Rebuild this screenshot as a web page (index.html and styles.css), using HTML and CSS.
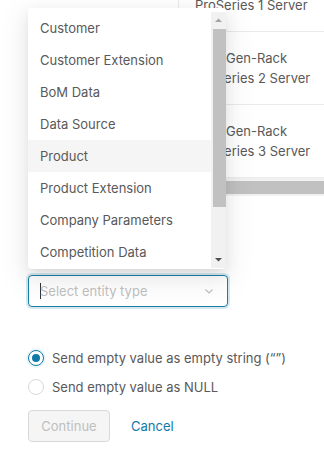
FILE: index.html
```html
<!DOCTYPE html>
<html lang="en">
<head>
    <meta charset="UTF-8">
    <meta name="viewport" content="width=device-width, initial-scale=1.0">
    <title>Import mapping</title>
    <link rel="stylesheet" href="styles.css">
</head>
<body>
    <div class="page">
        <div class="grid-area">
            <div class="grid-body">
                <div class="grid-row">
                    <div class="cell">Zeta Gen-Rack<br>ProSeries 1 Server</div>
                </div>
                <div class="grid-row">
                    <div class="cell">Zeta Gen-Rack<br>ProSeries 2 Server</div>
                </div>
                <div class="grid-row">
                    <div class="cell">Zeta Gen-Rack<br>ProSeries 3 Server</div>
                </div>
            </div>
            <div class="hscroll">
                <div class="hscroll-thumb"></div>
            </div>
        </div>

        <form class="form">
            <label class="field-label">Entity type</label>
            <div class="select is-focused">
                <span class="caret"></span>
                <span class="placeholder">Select entity type</span>
                <svg class="chevron" width="12" height="12" viewBox="0 0 12 12">
                    <path d="M2.5 4.5 L6 8 L9.5 4.5" fill="none" stroke="#bfbfbf" stroke-width="1.2"/>
                </svg>
            </div>

            <div class="radios">
                <label class="radio">
                    <span class="radio-dot is-checked"></span>
                    Send empty value as empty string (&ldquo;&rdquo;)
                </label>
                <label class="radio">
                    <span class="radio-dot"></span>
                    Send empty value as NULL
                </label>
            </div>

            <div class="actions">
                <button type="button" class="btn" disabled>Continue</button>
                <button type="button" class="btn-link">Cancel</button>
            </div>
        </form>

        <!-- dropdown of the entity type select -->
        <div class="dropdown">
            <div class="options">
                <div class="option">Customer</div>
                <div class="option">Customer Extension</div>
                <div class="option">BoM Data</div>
                <div class="option">Data Source</div>
                <div class="option is-active">Product</div>
                <div class="option">Product Extension</div>
                <div class="option">Company Parameters</div>
                <div class="option">Competition Data</div>
            </div>
            <div class="vscroll">
                <div class="vscroll-btn">
                    <svg width="15" height="17" viewBox="0 0 15 17"><path d="M4 10 L7.5 6.5 L11 10 Z" fill="#a3a3a3"/></svg>
                </div>
                <div class="vscroll-track">
                    <div class="vscroll-thumb"></div>
                </div>
                <div class="vscroll-btn">
                    <svg width="15" height="17" viewBox="0 0 15 17"><path d="M4 7 L7.5 10.5 L11 7 Z" fill="#505050"/></svg>
                </div>
            </div>
        </div>
    </div>
</body>
</html>
```

FILE: styles.css
```css
body {
    margin: 0;
    font-family: Inter, "Noto Sans", sans-serif;
    font-size: 13px;
    color: #595959;
    background: #fff;
}
.page {
    position: relative;
    width: 324px;
    height: 449px;
    overflow: hidden;
}

/* table behind the dropdown */
.grid-area {
    margin-left: 178px;
    width: 200px;
}
.grid-body {
    height: 178px;
    overflow: hidden;
}
.grid-row {
    border-bottom: 1px solid #ebebeb;
}
.grid-row:first-child {
    margin-top: -41px;
}
.cell {
    border-left: 1px solid #ebebeb;
    padding: 16px 16px;
    line-height: 20px;
    white-space: nowrap;
}
.hscroll {
    height: 18px;
    background: #f1f1f1;
    padding: 3px 0 2px;
    box-sizing: border-box;
}
.hscroll-thumb {
    height: 13px;
    background: #c1c1c1;
}

/* form */
.form {
    padding: 55px 0 0 28px;
    width: 200px;
}
.field-label {
    display: block;
    line-height: 20px;
    margin-bottom: 4px;
    color: #595959;
}
.select {
    display: flex;
    align-items: center;
    height: 32px;
    box-sizing: border-box;
    border: 1px solid #d9d9d9;
    border-radius: 4px;
    padding: 0 11px;
    background: #fff;
}
.select.is-focused {
    border-color: #1a7fa8;
    box-shadow: 0 0 0 2px rgba(26, 127, 168, 0.18);
}
.caret {
    display: inline-block;
    width: 1px;
    height: 16px;
    background: #333;
    margin-right: -1px;
}
.placeholder {
    flex: 1;
    color: #bfbfbf;
}
.chevron {
    display: block;
    margin-right: 1px;
}

.radios {
    margin-top: 40px;
    display: flex;
    flex-direction: column;
    gap: 7px;
}
.radio {
    display: flex;
    align-items: center;
    gap: 8px;
    line-height: 22px;
    white-space: nowrap;
}
.radio-dot {
    flex-shrink: 0;
    width: 16px;
    height: 16px;
    box-sizing: border-box;
    border: 1px solid #d9d9d9;
    border-radius: 50%;
    background: #fff;
    display: flex;
    align-items: center;
    justify-content: center;
}
.radio-dot.is-checked {
    border-color: #0f7aa8;
    box-shadow: 0 0 0 2px rgba(15, 122, 168, 0.08);
}
.radio-dot.is-checked::after {
    content: "";
    width: 8px;
    height: 8px;
    border-radius: 50%;
    background: #0f7aa8;
}

.actions {
    margin-top: 12px;
    display: flex;
    align-items: center;
    gap: 6px;
}
.btn {
    width: 82px;
    height: 32px;
    padding: 0;
    font: inherit;
    border: 1px solid #d9d9d9;
    border-radius: 4px;
    background: #f5f5f5;
    color: #bfbfbf;
}
.btn-link {
    height: 32px;
    padding: 0 15px;
    font: inherit;
    border: none;
    background: none;
    color: #0f7aa8;
    cursor: pointer;
}

/* dropdown overlay */
.dropdown {
    position: absolute;
    left: 28px;
    top: 8px;
    width: 198px;
    padding: 4px 0 1px;
    display: flex;
    background: #fff;
    border-radius: 4px;
    box-shadow: 0 6px 16px 0 rgba(0, 0, 0, 0.08), 0 3px 6px -4px rgba(0, 0, 0, 0.12), 0 9px 28px 8px rgba(0, 0, 0, 0.05);
}
.options {
    flex: 1;
    height: 256px;
    overflow: hidden;
}
.option {
    height: 32px;
    line-height: 32px;
    padding: 0 12px;
    white-space: nowrap;
    color: #595959;
}
.option.is-active {
    background: #f5f5f5;
}
.vscroll {
    width: 15px;
    height: 256px;
    display: flex;
    flex-direction: column;
    background: #f1f1f1;
}
.vscroll-btn {
    height: 17px;
}
.vscroll-btn svg {
    display: block;
}
.vscroll-track {
    flex: 1;
}
.vscroll-thumb {
    height: 178px;
    margin-left: 2px;
    background: #c1c1c1;
}
```
